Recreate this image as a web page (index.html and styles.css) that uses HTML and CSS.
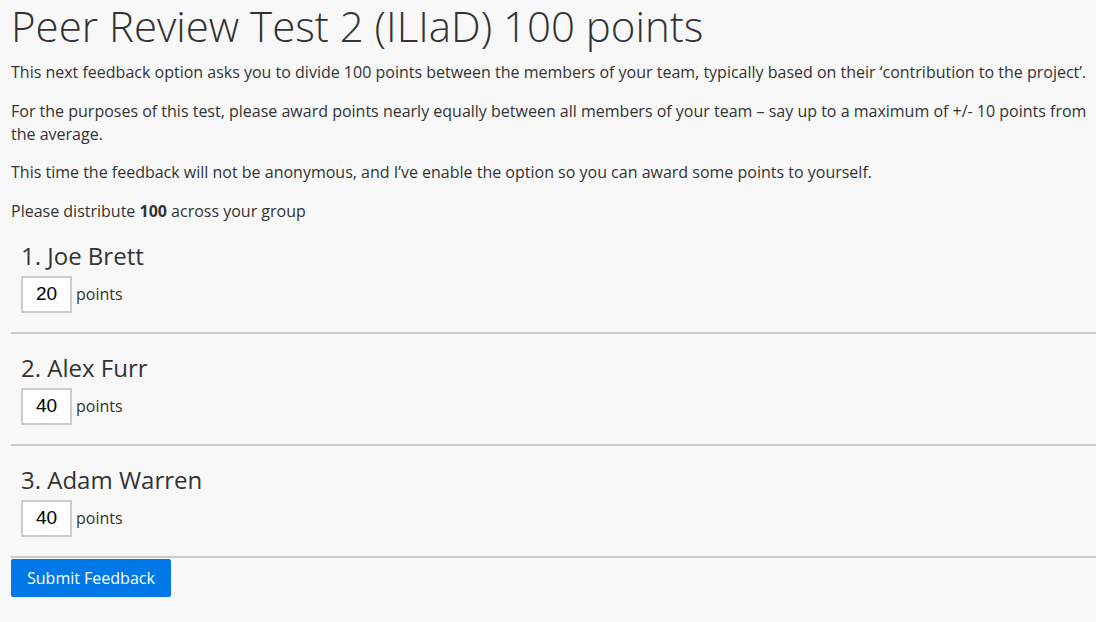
FILE: index.html
```html
<!DOCTYPE html>
<html>
<head>
<meta charset="utf-8">
<link rel="stylesheet" href="styles.css">
</head>
<body>
<div class="page">
  <h1 class="title">Peer Review Test 2 (ILIaD) 100 points</h1>
  <div class="intro">
    <p class="text">This next feedback option asks you to divide 100 points between the members of your team, typically based on their ‘contribution to the project’.</p>
    <p class="text">For the purposes of this test, please award points nearly equally between all members of your team – say up to a maximum of +/- 10 points from the average.</p>
    <p class="text">This time the feedback will not be anonymous, and I’ve enable the option so you can award some points to yourself.</p>
    <p class="text">Please distribute <b>100</b> across your group</p>
  </div>
  <div class="member first">
    <h2 class="name">1. Joe Brett</h2>
    <div class="row"><input class="pts" type="text" value="20"><span class="unit">points</span></div>
  </div>
  <div class="member">
    <h2 class="name">2. Alex Furr</h2>
    <div class="row"><input class="pts" type="text" value="40"><span class="unit">points</span></div>
  </div>
  <div class="member">
    <h2 class="name">3. Adam Warren</h2>
    <div class="row"><input class="pts" type="text" value="40"><span class="unit">points</span></div>
  </div>
  <button class="submit">Submit Feedback</button>
</div>
</body>
</html>
```
FILE: styles.css
```css
html, body {
  margin: 0;
  padding: 0;
  background: #f8f8f8;
}
.page {
  padding: 0 0 0 11px;
  font-family: "Open Sans", sans-serif;
  color: #333;
  font-size: 16px;
  line-height: 23px;
}
.title {
  font-weight: 300;
  font-size: 42px;
  line-height: 52px;
  margin: 0 0 9px;
  color: #333;
}
.text {
  margin: 0 0 15.5px;
}
.text:last-child {
  margin-bottom: 0;
}
.member {
  padding: 19px 10px 19px;
  border-bottom: 2px solid #cacaca;
}
.member.first {
  padding-top: 18px;
}
.name {
  font-weight: 400;
  font-size: 24px;
  line-height: 30px;
  margin: 0 0 5px;
}
.row {
  display: flex;
  align-items: center;
  gap: 4px;
}
.pts {
  width: 51px;
  height: 37px;
  box-sizing: border-box;
  border: 2px solid #ccc;
  background: #fff;
  font-family: "Liberation Sans", Arial, sans-serif;
  font-size: 19px;
  text-align: center;
  color: #000;
  padding: 0;
  margin: 0;
}
.unit {
  font-size: 16px;
}
.submit {
  display: block;
  margin-top: 1px;
  background: #0078e7;
  color: #fff;
  border: none;
  border-radius: 2px;
  font-family: "Open Sans", sans-serif;
  font-size: 16px;
  height: 38px;
  padding: 0 16px;
}
```
